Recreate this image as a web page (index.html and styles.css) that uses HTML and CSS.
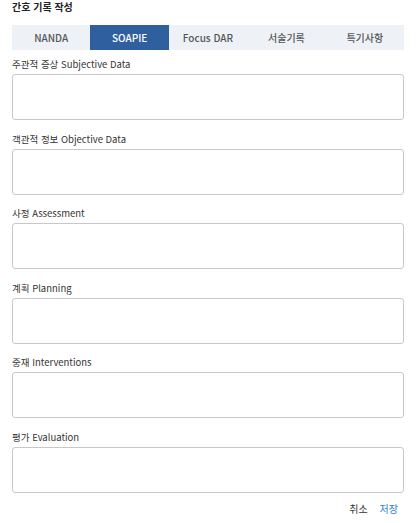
FILE: index.html
```html
<!DOCTYPE html>
<html lang="ko">
<head>
    <meta charset="UTF-8">
    <meta name="viewport" content="width=device-width, initial-scale=1.0">
    <title>간호 기록 작성</title>
    <link rel="stylesheet" href="styles.css">
</head>
<body>

    <!-- Nursing record form -->
    <div class="page">
        <h1 class="page-title">간호 기록 작성</h1>

        <div class="tabs">
            <button class="tab">NANDA</button>
            <button class="tab active">SOAPIE</button>
            <button class="tab">Focus DAR</button>
            <button class="tab">서술기록</button>
            <button class="tab">특기사항</button>
        </div>

        <div class="form">
            <div class="field">
                <label class="field-label">주관적 증상 Subjective Data</label>
                <textarea class="field-input"></textarea>
            </div>
            <div class="field">
                <label class="field-label">객관적 정보 Objective Data</label>
                <textarea class="field-input"></textarea>
            </div>
            <div class="field">
                <label class="field-label">사정 Assessment</label>
                <textarea class="field-input"></textarea>
            </div>
            <div class="field">
                <label class="field-label">계획 Planning</label>
                <textarea class="field-input"></textarea>
            </div>
            <div class="field">
                <label class="field-label">중재 Interventions</label>
                <textarea class="field-input"></textarea>
            </div>
            <div class="field">
                <label class="field-label">평가 Evaluation</label>
                <textarea class="field-input"></textarea>
            </div>
        </div>

        <div class="actions">
            <button class="text-button">취소</button>
            <button class="text-button primary">저장</button>
        </div>
    </div>

</body>
</html>
```

FILE: styles.css
```css
body {
    font-family: "Noto Sans CJK KR", "Noto Sans", sans-serif;
    background-color: #ffffff;
    color: #333;
    margin: 0;
}
.page {
    padding: 0 12px;
}
.page-title {
    font-size: 10px;
    font-weight: bold;
    line-height: 14px;
    margin: 0;
    color: #222;
}
.tabs {
    display: grid;
    grid-template-columns: repeat(5, 1fr);
    height: 25px;
    margin-top: 11px;
    background: #eef2f7;
}
.tab {
    font-family: inherit;
    font-size: 10px;
    font-weight: 500;
    color: #555;
    background: transparent;
    border: none;
    padding: 0;
    cursor: pointer;
}
.tab.active {
    background: #2f5f9f;
    color: #fff;
}
.form {
    display: flex;
    flex-direction: column;
    gap: 11.5px;
    padding-top: 7px;
}
.field {
    display: flex;
    flex-direction: column;
    gap: 3px;
}
.field-label {
    font-size: 9.5px;
    line-height: 14px;
    color: #333;
}
.field-input {
    box-sizing: border-box;
    width: 100%;
    height: 46px;
    border: 1px solid #c8c8c8;
    border-radius: 3px;
    resize: none;
    margin: 0;
    font-family: inherit;
}
.actions {
    display: flex;
    justify-content: flex-end;
    gap: 12px;
    margin-top: 9.5px;
    padding-right: 6px;
}
.text-button {
    font-family: inherit;
    font-size: 10px;
    line-height: 14px;
    background: none;
    border: none;
    padding: 0;
    color: #333;
    cursor: pointer;
}
.text-button.primary {
    color: #2f7fc8;
}
```
